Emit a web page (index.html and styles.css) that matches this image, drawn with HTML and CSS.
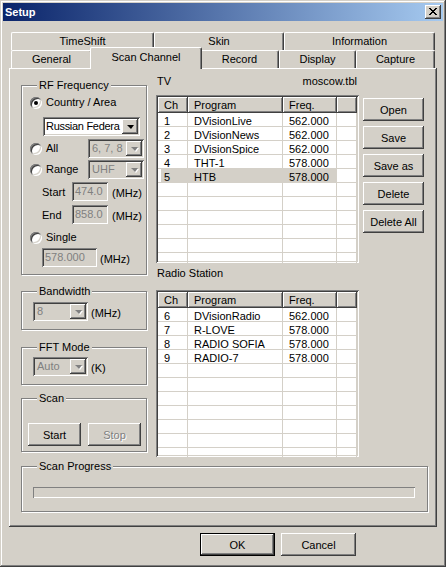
FILE: index.html
```html
<!DOCTYPE html>
<html lang="en">

<head>
    <meta charset="UTF-8">
    <meta name="viewport" content="width=device-width, initial-scale=1.0">
    <title>Setup</title>
    <link rel="stylesheet" href="styles.css">
</head>

<body>
    <div class="window">
        <div class="titlebar">
            <span class="title">Setup</span>
            <button class="close-btn" aria-label="Close">
                <svg width="8" height="7" viewBox="0 0 8 7" shape-rendering="crispEdges">
                    <path d="M0 0h2v1H0zM6 0h2v1H6zM1 1h2v1H1zM5 1h2v1H5zM2 2h4v1H2zM3 3h2v1H3zM2 4h4v1H2zM1 5h2v1H1zM5 5h2v1H5zM0 6h2v1H0zM6 6h2v1H6z" />
                </svg>
            </button>
        </div>

        <div class="dialog">
            <!-- Two rows of tabs, the selected row sits in front -->
            <div class="tabs">
                <div class="tab-row">
                    <div class="tab tab-timeshift">TimeShift</div>
                    <div class="tab tab-skin">Skin</div>
                    <div class="tab tab-info">Information</div>
                </div>
                <div class="tab-row">
                    <div class="tab tab-general">General</div>
                    <div class="tab tab-scan active">Scan Channel</div>
                    <div class="tab tab-record">Record</div>
                    <div class="tab tab-display">Display</div>
                    <div class="tab tab-capture">Capture</div>
                </div>
            </div>

            <div class="panel">
                <!-- Left column: tuning options -->
                <div class="left-col">
                    <div class="group group-rf">
                        <div class="group-title">RF Frequency</div>
                        <div class="option option-country">
                            <span class="radio checked"></span>
                            <span>Country / Area</span>
                        </div>
                        <div class="combo combo-country">
                            <span class="combo-text">Russian Federa</span>
                            <span class="combo-btn"></span>
                        </div>
                        <div class="option-row row-all">
                            <div class="option">
                                <span class="radio"></span>
                                <span>All</span>
                            </div>
                            <div class="combo combo-small disabled">
                                <span class="combo-text">6, 7, 8</span>
                                <span class="combo-btn"></span>
                            </div>
                        </div>
                        <div class="option-row row-range">
                            <div class="option">
                                <span class="radio"></span>
                                <span>Range</span>
                            </div>
                            <div class="combo combo-small disabled">
                                <span class="combo-text">UHF</span>
                                <span class="combo-btn"></span>
                            </div>
                        </div>
                        <div class="field-row row-start">
                            <span class="field-label">Start</span>
                            <span class="field field-range">474.0</span>
                            <span class="unit">(MHz)</span>
                        </div>
                        <div class="field-row row-end">
                            <span class="field-label">End</span>
                            <span class="field field-range">858.0</span>
                            <span class="unit">(MHz)</span>
                        </div>
                        <div class="option option-single">
                            <span class="radio"></span>
                            <span>Single</span>
                        </div>
                        <div class="field-row row-single">
                            <span class="field field-single">578.000</span>
                            <span class="unit unit-single">(MHz)</span>
                        </div>
                    </div>

                    <div class="group group-bandwidth">
                        <div class="group-title">Bandwidth</div>
                        <div class="field-row row-combo">
                            <div class="combo combo-mini disabled">
                                <span class="combo-text">8</span>
                                <span class="combo-btn"></span>
                            </div>
                            <span class="unit">(MHz)</span>
                        </div>
                    </div>

                    <div class="group group-fft">
                        <div class="group-title">FFT Mode</div>
                        <div class="field-row row-combo">
                            <div class="combo combo-mini disabled">
                                <span class="combo-text">Auto</span>
                                <span class="combo-btn"></span>
                            </div>
                            <span class="unit">(K)</span>
                        </div>
                    </div>

                    <div class="group group-scan">
                        <div class="group-title">Scan</div>
                        <div class="scan-buttons">
                            <button class="btn btn-scan">Start</button>
                            <button class="btn btn-scan" disabled>Stop</button>
                        </div>
                    </div>
                </div>

                <!-- Right column: channel tables -->
                <div class="right-col">
                    <div class="list-caption">
                        <span>TV</span>
                        <span>moscow.tbl</span>
                    </div>
                    <div class="list-block">
                        <div class="listview tv-list">
                            <div class="lv-row lv-head"><span>Ch</span><span>Program</span><span>Freq.</span><span></span></div>
                            <div class="lv-row"><span>1</span><span>DVisionLive</span><span>562.000</span><span></span></div>
                            <div class="lv-row"><span>2</span><span>DVisionNews</span><span>562.000</span><span></span></div>
                            <div class="lv-row"><span>3</span><span>DVisionSpice</span><span>562.000</span><span></span></div>
                            <div class="lv-row"><span>4</span><span>THT-1</span><span>578.000</span><span></span></div>
                            <div class="lv-row selected"><span>5</span><span>HTB</span><span>578.000</span><span></span></div>
                            <div class="lv-row"><span></span><span></span><span></span><span></span></div>
                            <div class="lv-row"><span></span><span></span><span></span><span></span></div>
                            <div class="lv-row"><span></span><span></span><span></span><span></span></div>
                            <div class="lv-row"><span></span><span></span><span></span><span></span></div>
                            <div class="lv-row"><span></span><span></span><span></span><span></span></div>
                            <div class="lv-row"><span></span><span></span><span></span><span></span></div>
                        </div>
                        <div class="list-buttons">
                            <button class="btn">Open</button>
                            <button class="btn">Save</button>
                            <button class="btn">Save as</button>
                            <button class="btn">Delete</button>
                            <button class="btn">Delete All</button>
                        </div>
                    </div>

                    <div class="list-caption radio-caption">
                        <span>Radio Station</span>
                    </div>
                    <div class="list-block">
                        <div class="listview radio-list">
                            <div class="lv-row lv-head"><span>Ch</span><span>Program</span><span>Freq.</span><span></span></div>
                            <div class="lv-row"><span>6</span><span>DVisionRadio</span><span>562.000</span><span></span></div>
                            <div class="lv-row"><span>7</span><span>R-LOVE</span><span>578.000</span><span></span></div>
                            <div class="lv-row"><span>8</span><span>RADIO SOFIA</span><span>578.000</span><span></span></div>
                            <div class="lv-row"><span>9</span><span>RADIO-7</span><span>578.000</span><span></span></div>
                            <div class="lv-row"><span></span><span></span><span></span><span></span></div>
                            <div class="lv-row"><span></span><span></span><span></span><span></span></div>
                            <div class="lv-row"><span></span><span></span><span></span><span></span></div>
                            <div class="lv-row"><span></span><span></span><span></span><span></span></div>
                            <div class="lv-row"><span></span><span></span><span></span><span></span></div>
                            <div class="lv-row"><span></span><span></span><span></span><span></span></div>
                            <div class="lv-row"><span></span><span></span><span></span><span></span></div>
                        </div>
                    </div>
                </div>

                <div class="group group-progress">
                    <div class="group-title">Scan Progress</div>
                    <div class="progress"></div>
                </div>
            </div>

            <div class="actions">
                <button class="btn btn-action btn-default">OK</button>
                <button class="btn btn-action">Cancel</button>
            </div>
        </div>
    </div>
</body>

</html>
```

FILE: styles.css
```css
* {
    box-sizing: border-box;
}

body {
    margin: 0;
    font-family: "Liberation Sans", Arial, sans-serif;
    font-size: 11px;
    color: #000;
    background-color: #d4d0c8;
}

button {
    font: inherit;
    color: inherit;
    border: 0;
    padding: 0;
}

/* Window frame and caption */
.window {
    width: 446px;
    height: 567px;
    padding: 3px;
    background-color: #d4d0c8;
    box-shadow: inset -1px -1px #404040, inset 1px 1px #d4d0c8,
        inset -2px -2px #808080, inset 2px 2px #fff;
}

.titlebar {
    display: flex;
    align-items: center;
    height: 18px;
    padding: 0 2px;
    background: linear-gradient(90deg, #0a246a, #a6caf0);
    color: #fff;
    font-weight: bold;
}

.close-btn {
    display: flex;
    align-items: center;
    justify-content: center;
    width: 16px;
    height: 14px;
    margin-left: auto;
    padding: 0 1px 1px 0;
    background-color: #d4d0c8;
    box-shadow: inset -1px -1px #404040, inset 1px 1px #fff,
        inset -2px -2px #808080;
}

.dialog {
    padding: 11px 6px 0;
}

/* Tabs */
.tabs {
    padding: 0 2px;
}

.tab-row {
    display: flex;
    height: 18px;
}

.tab {
    height: 18px;
    border: 1px solid #fff;
    border-bottom: 0;
    border-right-color: #404040;
    border-radius: 2px 2px 0 0;
    box-shadow: inset -1px 0 #808080;
    background-color: #d4d0c8;
    text-align: center;
    line-height: 16px;
    white-space: nowrap;
}

.tab.active {
    position: relative;
    z-index: 1;
    height: 22px;
    margin: -3px -2px -1px;
    line-height: 18px;
}

.tab-timeshift { width: 143px; }
.tab-skin { width: 130px; }
.tab-info { width: 151px; }
.tab-general { width: 81px; }
.tab-scan { width: 112px; }
.tab-record { width: 79px; }
.tab-display { width: 77px; }
.tab-capture { width: 79px; }

.panel {
    display: grid;
    grid-template-columns: 126px 1fr;
    grid-template-rows: 382px auto;
    align-content: start;
    align-items: start;
    column-gap: 9px;
    height: 459px;
    padding: 7px 9px 0 12px;
    box-shadow: inset -1px -1px #404040, inset 1px 1px #fff,
        inset -2px -2px #808080;
}

/* Etched group boxes */
.group {
    border: 1px solid #808080;
    box-shadow: 1px 1px #fff, inset 1px 1px #fff;
    padding: 0 2px 0 8px;
}

.group-title {
    display: table;
    margin: -7px 0 0 7px;
    padding: 0 2px;
    line-height: 13px;
    background-color: #d4d0c8;
}

.group-rf {
    margin-top: 10px;
    padding-bottom: 7px;
}

.group-bandwidth {
    margin-top: 16px;
    padding-bottom: 8px;
}

.group-fft {
    margin-top: 17px;
    padding-bottom: 8px;
}

.group-scan {
    margin-top: 13px;
    padding-bottom: 5px;
}

.group-progress {
    grid-column: 1 / -1;
    margin-top: 9px;
    padding-bottom: 13px;
}

/* Radio buttons */
.option {
    display: flex;
    align-items: center;
    gap: 4px;
    height: 13px;
    line-height: 13px;
}

.radio {
    position: relative;
    flex: none;
    width: 12px;
    height: 12px;
    border-radius: 50%;
    background-color: #fff;
    box-shadow: inset 1px 1px #808080, inset -1px -1px #fff,
        inset 2px 2px #404040, inset -2px -2px #d4d0c8;
}

.radio.checked::after {
    content: "";
    position: absolute;
    left: 4px;
    top: 4px;
    width: 4px;
    height: 4px;
    border-radius: 50%;
    background-color: #000;
}

.option-country {
    margin-top: 4px;
}

.option-row {
    display: flex;
    align-items: center;
    justify-content: space-between;
    height: 19px;
}

.row-all {
    margin-top: 3px;
}

.row-range {
    margin-top: 2px;
}

.option-single {
    margin-top: 7px;
}

/* Combo boxes */
.combo {
    display: flex;
    height: 19px;
    padding: 2px;
    background-color: #fff;
    box-shadow: inset 1px 1px #808080, inset -1px -1px #fff,
        inset 2px 2px #404040, inset -2px -2px #d4d0c8;
}

.combo-text {
    flex: 1;
    min-width: 0;
    padding-left: 2px;
    overflow: hidden;
    white-space: nowrap;
    line-height: 15px;
}

.combo-btn {
    display: flex;
    align-items: center;
    justify-content: center;
    flex: none;
    width: 16px;
    height: 15px;
    background-color: #d4d0c8;
    box-shadow: inset -1px -1px #404040, inset 1px 1px #fff,
        inset -2px -2px #808080;
}

.combo-btn::before {
    content: "";
    border-left: 4px solid transparent;
    border-right: 3px solid transparent;
    border-top: 4px solid #000;
}

.combo.disabled {
    background-color: #d4d0c8;
    color: #808080;
}

.combo.disabled .combo-btn::before {
    border-top-color: #808080;
    filter: drop-shadow(1px 1px 0 #fff);
}

.combo-country {
    width: 97px;
    margin: 8px 0 0 13px;
}

.combo-country .combo-text {
    padding-left: 1px;
    letter-spacing: -0.3px;
}

.combo-small {
    width: 56px;
}

.combo-mini {
    width: 55px;
    margin-left: 3px;
}

/* Edit fields */
.field-row {
    display: flex;
    align-items: center;
    height: 19px;
}

.row-start {
    margin-top: 3px;
    padding-left: 12px;
}

.row-end {
    margin-top: 4px;
    padding-left: 12px;
}

.row-single {
    margin-top: 4px;
    padding-left: 12px;
}

.row-combo {
    margin-top: 4px;
}

.group-fft .row-combo {
    margin-top: 3px;
}

.field-label {
    width: 30px;
}

.field {
    height: 19px;
    padding: 0 3px;
    line-height: 19px;
    color: #808080;
    background-color: #d4d0c8;
    box-shadow: inset 1px 1px #808080, inset -1px -1px #fff,
        inset 2px 2px #404040, inset -2px -2px #d4d0c8;
}

.field-range {
    width: 36px;
}

.field-single {
    width: 55px;
}

.unit {
    margin-left: 3px;
    padding-top: 2px;
}

.row-start .unit,
.row-end .unit {
    margin-left: 4px;
}

/* Push buttons */
.btn {
    display: flex;
    align-items: center;
    justify-content: center;
    height: 23px;
    background-color: #d4d0c8;
    box-shadow: inset -1px -1px #404040, inset 1px 1px #fff,
        inset -2px -2px #808080;
}

.btn:disabled {
    color: #808080;
    text-shadow: 1px 1px #fff;
}

.scan-buttons {
    display: flex;
    gap: 7px;
    margin: 18px 0 0 -2px;
}

.btn-scan {
    width: 53px;
}

/* Channel lists */
.list-caption {
    display: flex;
    justify-content: space-between;
    width: 203px;
    padding: 0 2px 0 1px;
    line-height: 13px;
}

.radio-caption {
    margin-top: 4px;
}

.list-block {
    display: grid;
    grid-template-columns: 203px 61px;
    column-gap: 4px;
    margin-top: 7px;
}

.radio-caption + .list-block {
    margin-top: 10px;
}

.listview {
    height: 168px;
    padding: 2px;
    overflow: hidden;
    background-color: #fff;
    box-shadow: inset 1px 1px #808080, inset -1px -1px #fff,
        inset 2px 2px #404040, inset -2px -2px #d4d0c8;
}

.radio-list {
    height: 167px;
}

.lv-row {
    display: grid;
    grid-template-columns: 30px 95px 54px 1fr;
    height: 14px;
}

.lv-row span {
    height: 14px;
    padding: 2px 0 0 6px;
    line-height: 12px;
    white-space: nowrap;
    overflow: hidden;
    border-right: 1px solid #d4d0c8;
    border-bottom: 1px solid #d4d0c8;
}

.lv-row.lv-head {
    height: 16px;
}

.lv-head span {
    height: 16px;
    padding-top: 1px;
    line-height: 15px;
    border: 0;
    background-color: #d4d0c8;
    box-shadow: inset -1px -1px #404040, inset 1px 1px #fff,
        inset -2px -2px #808080;
}

.lv-row.selected span:not(:last-child) {
    background-color: #d4d0c8;
    border-right-color: #d4d0c8;
}

.lv-row.selected span:first-child {
    box-shadow: inset 3px 0 #fff;
}

.list-buttons {
    display: flex;
    flex-direction: column;
    gap: 5px;
    padding-top: 3px;
}

/* Progress bar */
.progress {
    width: 382px;
    height: 11px;
    margin: 14px 0 0 3px;
    box-shadow: inset 1px 1px #808080, inset -1px -1px #fff;
}

/* Dialog buttons */
.actions {
    display: flex;
    justify-content: flex-end;
    gap: 6px;
    margin-top: 6px;
    padding-right: 81px;
}

.btn-action {
    width: 75px;
}

.btn-default {
    border: 1px solid #000;
    box-shadow: inset -1px -1px #404040, inset 1px 1px #fff,
        inset -2px -2px #808080;
}
```
